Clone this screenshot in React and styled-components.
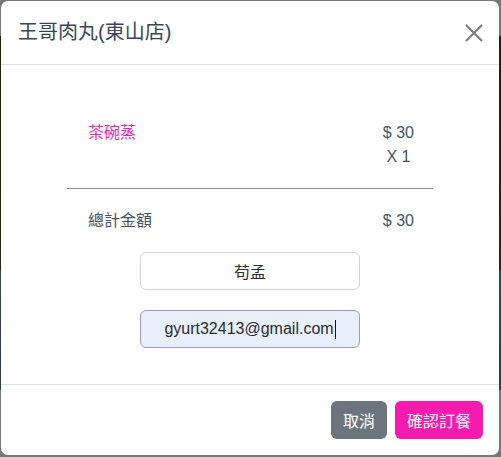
import styled, { createGlobalStyle } from 'styled-components';

const GlobalStyle = createGlobalStyle`
	* { box-sizing: border-box; }
	html, body {
		margin: 0;
		height: 100%;
	}
	body {
		font-family: 'Liberation Sans', 'Noto Sans CJK TC', sans-serif;
		background: linear-gradient(
			to bottom,
			#787878 0,
			#787878 36px,
			#241d14 36px,
			#2b2418 270px,
			#33475c 270px,
			#2f3d4d 390px,
			#787878 390px
		);
	}
	#root { padding: 1px; }
`;

const Modal = styled.div`
	width: 498px;
	height: 454px;
	background: #fff;
	border-radius: 7px;
	display: flex;
	flex-direction: column;
	overflow: hidden;
	color: #465264;
`;

const Header = styled.div`
	display: flex;
	align-items: center;
	justify-content: space-between;
	padding: 16px 15px 16px 17px;
	border-bottom: 1px solid #dee2e6;
`;

const Title = styled.h5`
	margin: 0;
	font-size: 20px;
	font-weight: normal;
	line-height: 31px;
	color: #3a4658;
`;

const CloseButton = styled.button`
	width: 20px;
	height: 20px;
	padding: 0;
	border: 0;
	background: none;
	display: flex;
	align-items: center;
	justify-content: center;
	cursor: pointer;
`;

const Body = styled.div`
	flex: 1;
	display: flex;
	flex-direction: column;
	align-items: center;
	padding-top: 56px;
`;

const Summary = styled.div`
	width: 366px;
	display: flex;
	flex-direction: column;
`;

const Row = styled.div`
	display: flex;
	justify-content: space-between;
	padding: 0 19px 0 21px;
	font-size: 16px;
	line-height: 24px;
`;

const ItemName = styled.span`
	color: ${({ $accent }) => ($accent ? '#f31fb5' : '#465264')};
`;

const Price = styled.div`
	display: flex;
	flex-direction: column;
	align-items: center;
`;

const Divider = styled.hr`
	margin: 19px 0 20px;
	border: 0;
	border-top: 1px solid #8a8a8a;
`;

const Field = styled.div`
	width: 220px;
	height: 38px;
	margin-top: ${({ $gap }) => $gap}px;
	border: 1px solid ${({ $filled }) => ($filled ? '#ab8ee6' : '#ced4da')};
	border-radius: 6px;
	background: ${({ $filled }) => ($filled ? '#e8f0fe' : '#fff')};
	display: flex;
	align-items: center;
	justify-content: center;
	font-size: 16px;
	color: #2b2b2b;
`;

const Caret = styled.span`
	display: inline-block;
	width: 1px;
	height: 19px;
	margin-left: 1px;
	background: #111;
	vertical-align: middle;
`;

const Footer = styled.div`
	display: flex;
	justify-content: flex-end;
	padding: 12px;
	border-top: 1px solid #dee2e6;
`;

const Button = styled.button`
	margin: 4px;
	height: 38px;
	padding: 0 12px;
	border: 0;
	border-radius: 6px;
	font-family: 'Liberation Sans', 'Noto Sans CJK TC', sans-serif;
	font-size: 16px;
	color: #fff;
	background: ${({ $primary }) => ($primary ? '#f71aae' : '#6c757d')};
	cursor: pointer;
`;

export default function App() {
	return (
		<>
			<GlobalStyle />
			<Modal>
				<Header>
					<Title>王哥肉丸(東山店)</Title>
					<CloseButton aria-label="close">
						<svg width="18" height="18" viewBox="0 0 18 18">
							<path d="M1 1 L17 17 M17 1 L1 17" stroke="#7a7a7a" strokeWidth="2" />
						</svg>
					</CloseButton>
				</Header>
				<Body>
					<Summary>
						<Row>
							<ItemName $accent>茶碗蒸</ItemName>
							<Price>
								<span>$ 30</span>
								<span>X 1</span>
							</Price>
						</Row>
						<Divider />
						<Row>
							<ItemName>總計金額</ItemName>
							<span>$ 30</span>
						</Row>
					</Summary>
					<Field $gap={19}>苟孟</Field>
					<Field $gap={20} $filled>
						gyurt32413@gmail.com<Caret />
					</Field>
				</Body>
				<Footer>
					<Button>取消</Button>
					<Button $primary>確認訂餐</Button>
				</Footer>
			</Modal>
		</>
	);
}
